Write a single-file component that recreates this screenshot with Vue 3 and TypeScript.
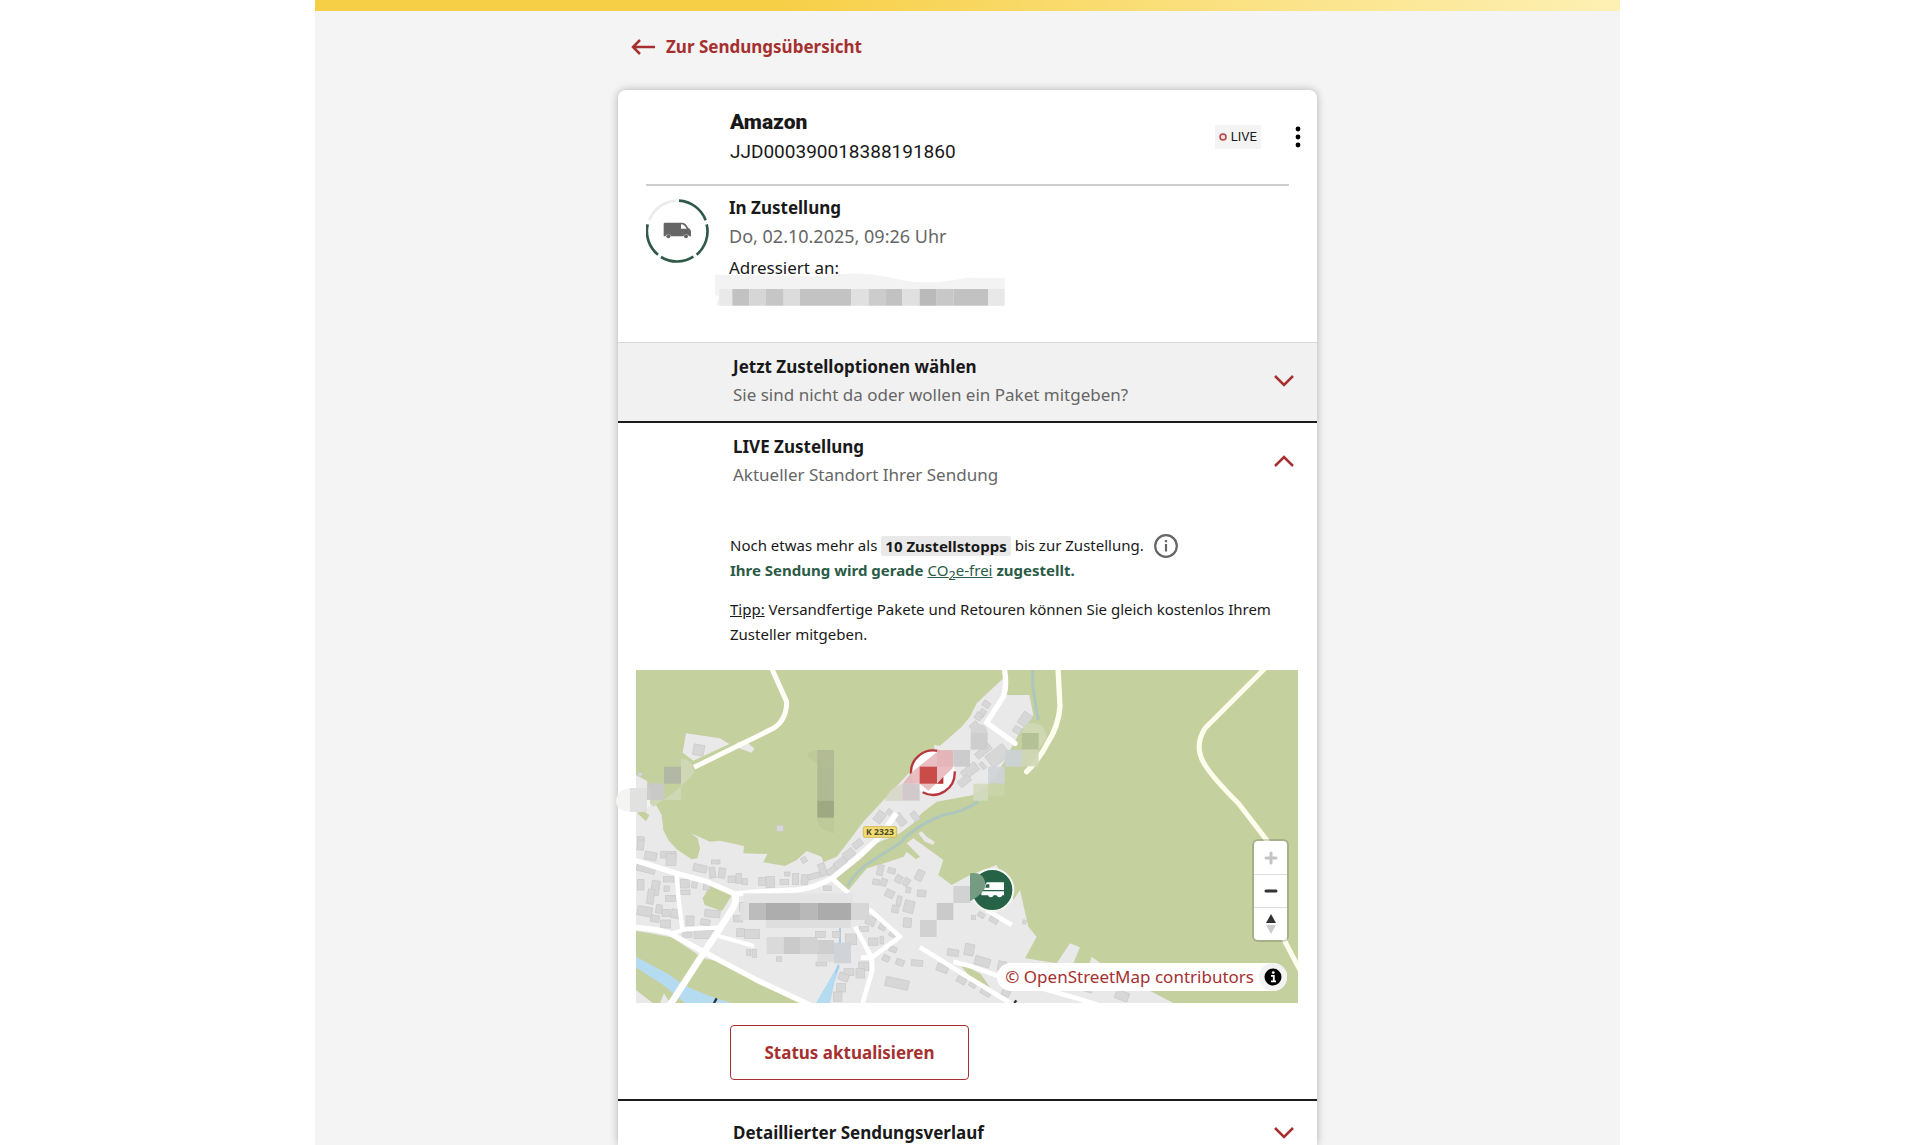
<script setup lang="ts">
import { ref } from 'vue'

type Cell = [x: number, y: number, w: number, h: number, fill: string]
type Building = [x: number, y: number, w: number, h: number, angle: number]

const optionsOpen = ref(false)
const liveOpen = ref(true)
const historyOpen = ref(false)

const recipientCells: Cell[] = [
  [328, 328, 39, 50, '#e9e9e9'], [367, 328, 51, 50, '#c2c2c2'], [418, 328, 50, 50, '#d6d6d6'],
  [468, 328, 53, 50, '#c6c6c6'], [521, 328, 49, 50, '#dcdcdc'], [570, 328, 153, 50, '#c3c3c3'],
  [723, 328, 53, 50, '#e0e0e0'], [776, 328, 50, 50, '#cccccc'], [826, 328, 51, 50, '#c2c2c2'],
  [877, 328, 52, 50, '#e0e0e0'], [929, 328, 51, 50, '#bababa'], [980, 328, 50, 50, '#c8c8c8'],
  [1030, 328, 104, 50, '#c2c2c2'], [1134, 328, 50, 50, '#e8e8e8']
]

const buildings: Building[] = [
  [82, 22, 20, 38, 5], [80, 105, 56, 22, 14], [104, 66, 36, 24, 10], [152, 64, 46, 20, 0], [168, 70, 30, 36, 0],
  [82, 148, 20, 32, 0], [124, 152, 24, 44, 8], [112, 178, 20, 44, 8], [160, 140, 32, 16, 0], [162, 168, 16, 16, 0],
  [166, 196, 32, 18, 0], [82, 230, 44, 28, 10], [138, 224, 18, 26, 8], [122, 256, 26, 20, 8], [156, 238, 24, 22, 0],
  [184, 238, 24, 26, 8], [152, 270, 30, 24, 0], [212, 148, 26, 26, 0], [246, 148, 16, 26, 8], [212, 180, 28, 14, 0],
  [250, 104, 40, 22, 12], [298, 112, 18, 32, -8], [304, 90, 26, 12, 0], [326, 114, 20, 30, 8], [280, 160, 20, 20, 0],
  [354, 138, 22, 20, 0], [378, 130, 16, 30, 0], [396, 146, 16, 18, 0], [446, 142, 20, 24, 0], [468, 140, 26, 32, 0],
  [510, 148, 26, 16, 0], [524, 126, 16, 12, 0], [548, 130, 18, 34, 0], [574, 134, 20, 30, 6], [594, 130, 36, 16, -16],
  [628, 100, 20, 38, -20], [650, 112, 34, 20, -38], [672, 88, 38, 22, -38], [700, 60, 34, 24, -38], [728, 32, 30, 20, -38],
  [574, 82, 16, 16, -30], [640, 168, 24, 14, 0], [388, 218, 14, 26, 0], [370, 256, 28, 20, 0], [284, 240, 46, 22, 5],
  [228, 258, 24, 30, 0], [272, 268, 28, 18, 10], [218, 306, 28, 16, 0], [252, 302, 60, 24, 0], [380, 296, 24, 24, 0],
  [404, 298, 44, 28, 0], [410, 358, 12, 18, 0], [426, 358, 14, 24, 0], [500, 380, 14, 14, 0], [618, 396, 32, 12, 0],
  [616, 304, 30, 18, 0], [668, 304, 22, 18, 0], [706, 312, 34, 32, 0], [748, 290, 28, 14, 0], [776, 324, 28, 22, 0],
  [810, 320, 10, 22, 0], [768, 260, 28, 26, 25], [808, 278, 20, 22, 28], [838, 304, 26, 18, 30], [880, 264, 24, 28, 5],
  [882, 212, 30, 36, 14], [918, 120, 22, 32, 25], [922, 180, 26, 20, 5], [880, 144, 18, 24, 35], [856, 136, 20, 22, 30],
  [834, 114, 22, 16, 15], [802, 104, 18, 32, 12], [788, 148, 20, 16, 10], [812, 146, 18, 22, 20], [826, 180, 26, 22, 25],
  [860, 198, 14, 28, 10], [846, 226, 20, 22, 10], [888, 172, 14, 16, 10], [838, 350, 22, 16, 20], [818, 376, 20, 18, 25],
  [858, 388, 24, 18, 20], [904, 390, 34, 18, 5], [826, 446, 70, 28, 12], [980, 404, 34, 22, 20], [1012, 358, 34, 20, 8],
  [1040, 442, 28, 18, 28], [746, 396, 30, 26, 0], [738, 416, 26, 28, 0], [702, 416, 30, 20, 0],
  [686, 430, 30, 22, 20], [680, 460, 26, 26, 0], [670, 486, 26, 28, 0], [1064, 342, 28, 34, 10], [1094, 382, 46, 26, 16],
  [1164, 394, 24, 28, 10], [1078, 452, 22, 20, 30], [1112, 476, 32, 20, 30], [1176, 478, 24, 20, 24],
  [1516, 484, 40, 26, 20], [1420, 464, 28, 22, 20], [1138, 262, 26, 16, 28], [1104, 248, 20, 14, 30], [1084, 256, 12, 12, 0],
  [1238, 270, 10, 12, 10], [1118, -386, 22, 18, 35], [1108, -362, 18, 22, 35], [1096, -352, 20, 22, 30], [1080, -322, 26, 18, -40],
  [1230, -352, 30, 40, 35], [1210, -310, 24, 20, 30], [1130, -244, 66, 42, -38], [1054, -192, 52, 28, -38], [1044, -158, 38, 22, -38],
  [1112, -204, 12, 22, -38], [1094, -246, 52, 20, -38], [796, -56, 26, 34, 38], [860, -50, 22, 38, -38], [830, -62, 14, 16, 38],
  [906, -56, 18, 30, -38], [250, -256, 32, 32, 10], [84, -172, 12, 10, 0], [500, -14, 20, 18, 0], [82, 20, 18, 10, 0]
]

const mosaic: Cell[] = [
  [60, -126, 51, 72, '#dededf'], [111, -140, 51, 50, '#c9c9ca'], [162, -190, 51, 51, '#b1b4a6'],
  [622, -240, 50, 50, '#b0b993'], [622, -190, 50, 102, '#aeb794'], [622, -88, 50, 51, '#9ba580'],
  [877, -139, 52, 51, '#cfc5c9'], [929, -190, 52, 51, '#c7423f'], [981, -240, 49, 50, '#e3b4b9'],
  [1030, -240, 50, 50, '#c9c9c9'], [1082, -292, 51, 51, '#cbcbcc'],
  [1236, -291, 50, 50, '#b2bf95'], [1236, -241, 50, 50, '#cfd6b4'], [1185, -240, 51, 50, '#cbd1d6'],
  [1134, -190, 50, 51, '#cfd3d8'], [1134, -139, 50, 36, '#cad4a8'], [1090, -139, 44, 51, '#d4d9be'],
  [930, 270, 50, 51, '#cecece'], [980, 219, 50, 51, '#c7c7c7'], [1030, 168, 50, 51, '#cfcfcf'],
  [400, 190, 330, 29, '#e3e3e3'], [390, 219, 27, 51, '#dfdfdf'], [417, 219, 51, 51, '#b7b7b7'],
  [468, 219, 102, 51, '#a7a7a7'], [570, 219, 52, 51, '#b3b3b3'], [622, 219, 101, 51, '#a5a5a5'],
  [723, 219, 54, 51, '#d5d5d5'], [468, 270, 254, 24, '#dcdcdc'], [470, 321, 51, 51, '#d8d8d8'],
  [521, 321, 51, 51, '#c7c7c7'], [572, 321, 50, 51, '#cfcfcf'], [622, 330, 50, 42, '#cbcbcb'],
  [672, 338, 51, 62, '#cdd0d6'], [622, 372, 50, 24, '#dadada']
]
</script>

<template>
  <div class="page">
    <main class="panel">
      <div class="topbar"></div>
      <div class="column">
        <a class="back" href="#">
          <svg width="25" height="18" viewBox="0 0 25 18" fill="none" stroke="currentColor" stroke-width="2.5">
            <path d="M24 9H2M9 2L2 9l7 7" />
          </svg>
          Zur Sendungsübersicht
        </a>

        <article class="card">
          <header class="head">
            <div class="head-text">
              <h1>Amazon</h1>
              <p class="number">JJD000390018388191860</p>
            </div>
            <span class="live">
              <svg width="8" height="8" viewBox="0 0 8 8"><circle cx="4" cy="4" r="3" fill="#f6dcdc" stroke="#b8433f" stroke-width="1.5" /></svg>
              LIVE
            </span>
            <button class="menu" type="button" aria-label="Menü">
              <svg width="6" height="22" viewBox="0 0 6 22">
                <circle cx="3" cy="3" r="2.4" /><circle cx="3" cy="11" r="2.4" /><circle cx="3" cy="19" r="2.4" />
              </svg>
            </button>
          </header>

          <section class="status">
            <svg class="ring" width="64" height="64" viewBox="0 0 192 192">
              <g fill="none" stroke="#2f5a48" stroke-width="8">
                <path d="M99 5A91 91 0 0 1 179 64" />
                <path d="M182 76A91 91 0 0 1 152 167" />
                <path d="M142 173A91 91 0 0 1 45 174" />
                <path d="M36 167A91 91 0 0 1 5 76" />
                <path d="M10 64A91 91 0 0 1 89 5" stroke="#ebebeb" />
              </g>
              <path
                fill="#666"
                fill-rule="evenodd"
                d="M53 75q0-4 4-4h51c10 0 15 9 20 17 6 3 7 6 7 12v12h-6a9 9 0 0 0-17 0H75a9 9 0 0 0-17 0h-5zM105 76v13h17c-5-8-8-13-17-13z"
              />
              <g fill="#666"><circle cx="67" cy="112" r="6" /><circle cx="120" cy="112" r="6" /></g>
            </svg>
            <div class="status-text">
              <h2>In Zustellung</h2>
              <p class="muted">Do, 02.10.2025, 09:26 Uhr</p>
              <p class="addressee">Adressiert an:</p>
              <svg class="recipient" width="290" height="33" viewBox="315 280 870 99">
                <path d="M315 285L640 290Q740 270 860 298Q950 320 1070 294L1184 296V378H318L328 352L315 345Z" fill="#f3f3f3" />
                <rect v-for="(c, i) in recipientCells" :key="i" :x="c[0]" :y="c[1]" :width="c[2]" :height="c[3]" :fill="c[4]" />
              </svg>
            </div>
          </section>

          <section class="fold options">
            <button class="fold-head" type="button" :aria-expanded="optionsOpen" @click="optionsOpen = !optionsOpen">
              <span class="fold-text">
                <strong>Jetzt Zustelloptionen wählen</strong>
                <span class="muted">Sie sind nicht da oder wollen ein Paket mitgeben?</span>
              </span>
              <svg class="chevron" width="20" height="12" viewBox="0 0 20 12"><path d="M1 1l9 9 9-9" /></svg>
            </button>
          </section>

          <section class="fold delivery">
            <button class="fold-head" type="button" :aria-expanded="liveOpen" @click="liveOpen = !liveOpen">
              <span class="fold-text">
                <strong>LIVE Zustellung</strong>
                <span class="muted">Aktueller Standort Ihrer Sendung</span>
              </span>
              <svg class="chevron" width="20" height="12" viewBox="0 0 20 12"><path d="M1 11l9-9 9 9" /></svg>
            </button>

            <div v-if="liveOpen" class="live-body">
              <div class="copy">
                <p class="stops">
                  <span>Noch etwas mehr als</span>
                  <b class="count">10 Zustellstopps</b>
                  <span>bis zur Zustellung.</span>
                  <button class="info" type="button" aria-label="Information">
                    <svg width="24" height="24" viewBox="0 0 24 24">
                      <circle cx="12" cy="12" r="10.8" fill="none" stroke="#666" stroke-width="2.2" />
                      <path d="M12 10v7.5M12 6v2.2" stroke="#666" stroke-width="2.2" />
                    </svg>
                  </button>
                </p>
                <p class="green"><b>Ihre Sendung wird gerade</b> <a href="#">CO<sub>2</sub>e-frei</a> <b>zugestellt.</b></p>
                <p class="tip"><u>Tipp:</u> Versandfertige Pakete und Retouren können Sie gleich kostenlos Ihrem Zusteller mitgeben.</p>
              </div>

              <div class="map">
                <svg class="canvas" viewBox="78 -480 1986 999">
                  <defs>
                    <clipPath id="frame"><rect x="78" y="-480" width="1986" height="999" /></clipPath>
                  </defs>
                  <g clip-path="url(#frame)">
                    <rect x="78" y="-480" width="1986" height="999" fill="#c5d09f" />
                    <g fill="#e9e9e9">
                      <path d="M78-165L110-148L130-90L155-45L160 0L175 30L200 58L245 88L262 85L270 55L263 25L243 10L300 35L330 32L402 48L400 70L472 72L460 97L525 108L560 90L590 63L635 80L640 97L680 80L715 35L760-25L830-100L905-180L975-240L1010-270L1055-310L1080-340L1100-380L1180-455L1188-405L1258-405L1270-345L1230-295L1180-200L1140-140L1090-105L980-85L935-50L910-20L870 10L800 40L760 80L680 145L715 180L770 115L820 100L880 80L890 65L918 88L930 80L890 40L910 25L1000 90L985 135L1025 165L1080 135L1160 105L1210 210L1230 180L1255 290L1280 320L1245 385L1340 400L1380 340L1410 352L1390 400L1435 410L1445 380L1500 420L1690 519H590L330 395L280 385L185 322L78 302Z" />
                      <path d="M228-290L330-275L358-258L250-208L218-232Z" />
                      <path d="M380-262L405-268L434-244L424-232L380-248Z" />
                      <path d="M78 480L128 519H180L162 490L150 519H78Z" />
                      <path d="M972-256L1000-250V-236L974-240Z" />
                      <path d="M925 10L945 35L970 45L974 35L950 20L935 4Z" />
                    </g>
                    <g fill="#c5d09f">
                      <path d="M278 205L302 164Q340 172 366 195L336 243L284 225Z" />
                      <path d="M1040 392L1112 432L1140 472L1080 440Z" />
                      <path d="M82-50L92-64L118-44L108-26Z" />
                      <path d="M680 147L760 82L800 45L880 25L890 65L880 80L820 100L770 115L715 180Z" />
                    </g>
                    <path d="M1268-480V-440Q1275-380 1285-330M1105-85Q1060-55 1000-45Q910-10 870 40L790 90Q740 120 712 168" fill="none" stroke="#adc7bd" stroke-width="9" />
                    <path d="M78 380L180 435Q230 480 365 519H225L160 465Q120 440 78 412Z M618 519L664 440L685 405L690 410L674 455L660 519Z" fill="#b5dbf1" />
                    <path d="M690 290V340M686 404L676 430" stroke="#a8cdea" stroke-width="6" />

                    <g fill="#d7d7d7" stroke="#c8c8c8" stroke-width="2">
                      <rect
                        v-for="(b, i) in buildings"
                        :key="i"
                        :x="b[0]"
                        :y="b[1]"
                        :width="b[2]"
                        :height="b[3]"
                        :transform="`rotate(${b[4]} ${b[0] + b[2] / 2} ${b[1] + b[3] / 2})`"
                      />
                    </g>

                    <g fill="none" stroke="#fff" stroke-linejoin="round">
                      <g stroke-width="16">
                        <path d="M70 90L200 130L290 155L375 192L450 185L560 180Q610 175 665 145L740 85L800 30L860-50" />
                        <path d="M372 190Q385 210 365 240L320 310L280 370L180 525" stroke-width="20" />
                        <path d="M70 292Q150 298 180 310L280 365L440 450L600 525" />
                        <path d="M200 130L205 200L217 300M180 312L230 297L322 293M325 318L432 348" stroke-width="13" />
                        <path d="M665 145L715 188M778 238L870 320L785 383H753M735 290L785 383L787 420L758 519" stroke-width="14" />
                        <path d="M930 352L1080 445L1210 525M1030 395L1080 408L1170 440L1400 505L1480 530M1130 240L1205 285" stroke-width="14" />
                      </g>
                      <path d="M252-188L490-305Q530-330 530-385L485-485" stroke="#fffef9" stroke-width="15" />
                      <path d="M1183-485Q1192-430 1180-400L1130-322L1215-260" stroke-width="16" stroke-linecap="round" />
                      <path d="M1344-485L1350-370Q1345-310 1312-260Q1290-215 1250-175" stroke="#fffff0" stroke-width="16" stroke-linecap="round" />
                      <path d="M1965-485L1785-305Q1750-250 1785-195Q1810-155 1885-80L1970 30L2025 335L2070 420" stroke="#fdfdec" stroke-width="15" />
                    </g>
                    <path d="M320 505L312 519M1219 511L1213 519" stroke="#333" stroke-width="7" />

                    <g class="road-sign">
                      <rect x="760" y="-10" width="100" height="32" rx="5" fill="#f0dc72" stroke="#d3bc58" stroke-width="3" />
                      <text x="810" y="15">K 2323</text>
                    </g>
                  </g>

                  <circle cx="969" cy="-172" r="66" fill="#fff" />
                  <path d="M903-168A66 66 0 0 1 990-235M1034-176A66 66 0 0 1 938-113" fill="none" stroke="#b7353c" stroke-width="7" />
                  <path d="M905-173L985-237H1028V-185L955-118L930-139H878Z" fill="#e3aeb2" fill-opacity=".8" />
                  <path d="M825-88Q835-125 877-139V-88ZM1000-139V-162L976-139Z" fill="#d8d8cb" />
                  <path d="M981-139H1000V-160Z" fill="#bd2f35" />
                  <path d="M213-190V-213Q250-215 252-170Q210-120 130-70L111-90H213Z" fill="#cfd7b4" />
                  <path d="M60-126Q18-120 18-85Q22-55 60-55H100L120-75V-126Z" fill="#f4f4f3" />
                  <path d="M622-240Q590-235 592-220L622-200V-30Q625 0 672 10V-40Z" fill="#bfca9a" />
                  <path d="M1236-291Q1240-322 1270-322Q1310-315 1308-275L1286-241H1236Z" fill="#cfd8b3" />
                  <path d="M1082-292Q1085-318 1108-318Q1132-316 1133-292Z" fill="#d5d5d5" />

                  <circle cx="1147" cy="180" r="63" fill="#266246" stroke="#f5f8f2" stroke-width="6" />
                  <path
                    fill="#fff"
                    fill-rule="evenodd"
                    d="M1182 157H1131L1124 166L1118 180H1182ZM1129 163H1138V173H1126ZM1114 184H1182V196H1177A9 9 0 0 1 1160 196H1151A9 9 0 0 1 1134 196H1114Z"
                  />
                  <path d="M1080 130Q1122 122 1127 165Q1125 190 1080 214Z" fill="#759c83" />

                  <rect v-for="(c, i) in mosaic" :key="i" :x="c[0]" :y="c[1]" :width="c[2]" :height="c[3]" :fill="c[4]" fill-opacity=".92" />
                </svg>

                <div class="zoom">
                  <button type="button" aria-label="Vergrößern">
                    <svg width="14" height="14" viewBox="0 0 14 14" stroke="#c4c4c4"><path d="M2 7h10M7 2v10" /></svg>
                  </button>
                  <button type="button" aria-label="Verkleinern">
                    <svg width="14" height="14" viewBox="0 0 14 14" stroke="#333"><path d="M2 7h10" /></svg>
                  </button>
                  <button type="button" aria-label="Nach Norden ausrichten">
                    <svg width="10" height="20" viewBox="0 0 10 20"><path d="M5 0l5 9H0z" fill="#333" /><path d="M0 11h10l-5 9z" fill="#ccc" /></svg>
                  </button>
                </div>

                <div class="credit">
                  <a href="#">© OpenStreetMap contributors</a>
                  <button type="button" aria-label="Quellenangabe">
                    <svg width="18" height="18" viewBox="0 0 18 18">
                      <circle cx="9" cy="9" r="8.5" />
                      <path d="M7 7.8h2.8V13M7 13.3h5" fill="none" stroke="#fff" stroke-width="1.8" /><circle cx="9.3" cy="4.6" r="1.4" fill="#fff" />
                    </svg>
                  </button>
                </div>
              </div>

              <button class="refresh" type="button">Status aktualisieren</button>
            </div>
          </section>

          <section class="fold history">
            <button class="fold-head" type="button" :aria-expanded="historyOpen" @click="historyOpen = !historyOpen">
              <strong>Detaillierter Sendungsverlauf</strong>
              <svg class="chevron" width="20" height="12" viewBox="0 0 20 12"><path d="M1 1l9 9 9-9" /></svg>
            </button>
          </section>
        </article>
      </div>
    </main>
  </div>
</template>

<style>
body {
  margin: 0;
  background: #fff;
}
</style>

<style scoped>
.page {
  display: flex;
  min-height: 100vh;
  padding: 0 300px 0 315px;
  font-family: "Noto Sans", sans-serif;
  font-size: 17px;
  line-height: 28px;
  color: #191919;
}
.page *,
.page {
  box-sizing: border-box;
}
h1,
h2,
p {
  margin: 0;
}
button {
  padding: 0;
  border: 0;
  background: none;
  color: inherit;
  font: inherit;
  cursor: pointer;
}
svg {
  display: block;
  flex: none;
}
.panel {
  display: flex;
  flex: 1;
  flex-direction: column;
  min-width: 0;
  background: #f4f4f4;
}
.topbar {
  height: 11px;
  background: linear-gradient(90deg, #f7cf46 0%, #f7cf46 35%, #fdf0b4 100%);
}
.column {
  display: flex;
  flex: 1;
  flex-direction: column;
  width: 100%;
  max-width: 699px;
  margin: 0 auto;
}
.back {
  display: flex;
  align-items: center;
  align-self: flex-start;
  gap: 10px;
  margin: 22px 0 29px 13px;
  color: #a5302f;
  font-weight: 700;
  text-decoration: none;
}
.card {
  flex: 1;
  border-radius: 8px 8px 0 0;
  background: #fff;
  box-shadow: 0 0 8px rgba(0, 0, 0, 0.28);
}
.head {
  display: flex;
  align-items: center;
  padding: 17px 7px 17px 112px;
  font-family: Roboto, sans-serif;
}
.head-text {
  flex: 1;
  line-height: 30px;
}
h1 {
  font-size: 21px;
  font-weight: 900;
  line-height: 30px;
}
.number {
  font-size: 19px;
}
.live {
  display: flex;
  align-items: center;
  gap: 4px;
  height: 24px;
  margin-right: 25px;
  padding: 0 4px;
  background: #f4f4f4;
  font-size: 13px;
}
.menu {
  display: flex;
  align-items: center;
  justify-content: center;
  width: 24px;
  height: 30px;
}
.status {
  display: flex;
  gap: 19px;
  margin: 0 28px;
  padding: 8px 0 36px;
  border-top: 2px solid #cfcfcf;
}
.ring {
  margin-top: 5px;
}
h2,
strong {
  font-size: 17px;
  font-weight: 700;
  line-height: 28px;
}
.muted {
  color: #666;
}
.status .muted {
  font-size: 18px;
}
.addressee {
  margin-top: 4px;
}
.recipient {
  margin: -9px 0 0 -14px;
}
.fold-head {
  display: flex;
  align-items: center;
  justify-content: space-between;
  width: 100%;
  padding: 10px 23px 12px 115px;
  text-align: left;
}
.fold-text {
  display: flex;
  flex-direction: column;
}
.chevron {
  fill: none;
  stroke: #a5302f;
  stroke-width: 2.5;
}
.options {
  border-top: 1px solid #d9d9d9;
  background: #f1f1f1;
}
.delivery,
.history {
  border-top: 2px solid #1c1c1c;
}
.history .fold-head {
  padding: 21px 23px 0 115px;
}
.history strong {
  line-height: 22px;
}
.live-body {
  padding: 32px 19px 19px 18px;
}
.copy {
  padding: 0 12px 0 94px;
  font-size: 15px;
  line-height: 25px;
}
.stops {
  display: flex;
  align-items: center;
  gap: 4px;
}
.count {
  padding: 0 4px;
  border-radius: 2px;
  background: #e9e9e9;
  line-height: 20px;
}
.info {
  height: 24px;
  margin-left: 6px;
}
.green,
.green a {
  color: #2b5b47;
}
.green sub {
  font-size: 13px;
  line-height: 0;
}
.tip {
  margin-top: 14px;
}
.map {
  position: relative;
  margin-top: 23px;
}
.canvas {
  width: 100%;
  height: auto;
  overflow: visible;
}
.road-sign text {
  fill: #4f4a2a;
  font-family: "Open Sans", sans-serif;
  font-size: 26px;
  font-weight: 700;
  text-anchor: middle;
}
.zoom {
  position: absolute;
  right: 11px;
  bottom: 63px;
  display: flex;
  flex-direction: column;
  width: 33px;
  border-radius: 4px;
  background: #fff;
  box-shadow: 0 0 0 2px rgba(0, 0, 0, 0.15);
}
.zoom button {
  display: flex;
  align-items: center;
  justify-content: center;
  height: 33px;
}
.zoom button + button {
  border-top: 1px solid #ddd;
}
.zoom path {
  stroke-width: 3;
  stroke-linecap: round;
}
.credit {
  position: absolute;
  right: 11px;
  bottom: 12px;
  display: flex;
  align-items: center;
  gap: 5px;
  padding: 0 0 0 8px;
  border-radius: 14px;
  background: #fff;
}
.credit a {
  color: #a5302f;
  text-decoration: none;
}
.credit button {
  display: flex;
  align-items: center;
  justify-content: center;
  width: 28px;
  height: 28px;
  border-radius: 14px;
  background: #f3f3f3;
}
.refresh {
  display: block;
  width: 239px;
  height: 55px;
  margin: 22px 0 0 94px;
  border: 1px solid #a5302f;
  border-radius: 4px;
  color: #a5302f;
  font-weight: 700;
}
@media (max-width: 1400px) {
  .page {
    padding: 0;
  }
}
</style>
